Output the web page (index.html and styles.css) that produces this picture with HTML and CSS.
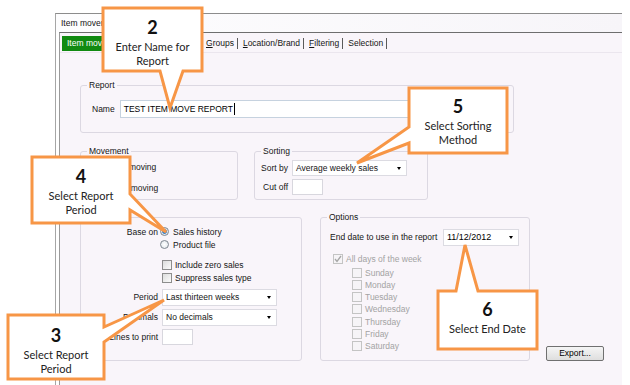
FILE: index.html
```html
<!DOCTYPE html>
<html lang="en">
  <head>
    <meta charset="UTF-8" />
    <link rel="stylesheet" href="styles.css">
    <title>Item movement report</title>
  </head>
  <body>
    <div class="window">
      <div class="titlebar">Item movement report</div>
      <div class="panel">
        <div class="tabs">
          <span class="tab-active">Item movement</span>
          <span class="tab tab-covered">Options</span>
          <span class="tab"><u>G</u>roups</span>
          <span class="tab"><u>L</u>ocation/Brand</span>
          <span class="tab"><u>F</u>iltering</span>
          <span class="tab">Selection</span>
        </div>

        <div class="content">
          <!-- Report -->
          <fieldset class="group report">
            <legend>Report</legend>
            <div class="group-body report-body">
              <span class="name-label">Name</span>
              <div class="input name-input">TEST ITEM MOVE REPORT<span class="caret"></span></div>
            </div>
          </fieldset>

          <div class="row row-middle">
            <!-- Movement -->
            <fieldset class="group movement">
              <legend>Movement</legend>
              <div class="group-body movement-body">
                <div class="option"><span class="radio on"></span>Fast moving</div>
                <div class="option"><span class="radio"></span>Slow moving</div>
              </div>
            </fieldset>

            <!-- Sorting -->
            <fieldset class="group sorting">
              <legend>Sorting</legend>
              <div class="group-body sorting-body">
                <span class="sort-label">Sort by</span>
                <div class="select sort-select"><span>Average weekly sales</span><span class="arrow"></span></div>
                <span class="sort-label">Cut off</span>
                <div class="input cutoff-input"></div>
              </div>
            </fieldset>
          </div>

          <div class="row row-bottom">
            <!-- Period -->
            <fieldset class="group period">
              <legend>Sales</legend>
              <div class="group-body period-body">
                <div class="field field-radio">
                  <span class="field-label">Base on</span>
                  <span class="radio on"></span>Sales history
                </div>
                <div class="field field-radio">
                  <span class="field-label"></span>
                  <span class="radio"></span>Product file
                </div>
                <div class="field field-check first-check">
                  <span class="field-label"></span>
                  <span class="check"></span>Include zero sales
                </div>
                <div class="field field-check">
                  <span class="field-label"></span>
                  <span class="check"></span>Suppress sales type
                </div>
                <div class="field field-select first-select">
                  <span class="field-label">Period</span>
                  <div class="select period-select"><span>Last thirteen weeks</span><span class="arrow"></span></div>
                </div>
                <div class="field field-select">
                  <span class="field-label">Decimals</span>
                  <div class="select period-select"><span>No decimals</span><span class="arrow"></span></div>
                </div>
                <div class="field field-input">
                  <span class="field-label">Lines to print</span>
                  <div class="input lines-input"></div>
                </div>
              </div>
            </fieldset>

            <!-- Options -->
            <fieldset class="group options">
              <legend>Options</legend>
              <div class="group-body options-body">
                <div class="end-date">
                  <span>End date to use in the report</span>
                  <div class="select date-select"><span class="date-text">11/12/2012</span><span class="arrow"></span></div>
                </div>
                <div class="day all-days">
                  <span class="check disabled">
                    <svg width="8" height="8" viewBox="0 0 8 8"><polyline points="1,4 3,6.5 7,1" fill="none" stroke="#a6a6a6" stroke-width="1.3"/></svg>
                  </span>All days of the week
                </div>
                <div class="day"><span class="check disabled"></span>Sunday</div>
                <div class="day"><span class="check disabled"></span>Monday</div>
                <div class="day"><span class="check disabled"></span>Tuesday</div>
                <div class="day"><span class="check disabled"></span>Wednesday</div>
                <div class="day"><span class="check disabled"></span>Thursday</div>
                <div class="day"><span class="check disabled"></span>Friday</div>
                <div class="day"><span class="check disabled"></span>Saturday</div>
              </div>
            </fieldset>

            <button class="export-btn">Export...</button>
          </div>
        </div>
      </div>
    </div>

    <!-- callouts -->
    <div class="callout callout-2">
      <svg width="99" height="63"><path d="M0,0 H99 V63 H80 L67,100 L57,63 H0 Z" /></svg>
      <div class="callout-text"><div class="num">2</div><div>Enter Name for</div><div>Report</div></div>
    </div>

    <div class="callout callout-5">
      <svg width="98" height="65"><path d="M0,0 H98 V65 H0 V55 L-52,75 L0,39 Z" /></svg>
      <div class="callout-text"><div class="num">5</div><div>Select Sorting</div><div>Method</div></div>
    </div>

    <div class="callout callout-4">
      <svg width="98" height="66"><path d="M0,0 H98 V37 L134,75 L98,53 V66 H0 Z" /></svg>
      <div class="callout-text"><div class="num">4</div><div>Select Report</div><div>Period</div></div>
    </div>

    <div class="callout callout-3">
      <svg width="96" height="64"><path d="M0,0 H96 V12 L156,-15 L96,27 V64 H0 Z" /></svg>
      <div class="callout-text"><div class="num">3</div><div>Select Report</div><div>Period</div></div>
    </div>

    <div class="callout callout-6">
      <svg width="99" height="58"><path d="M0,0 H18 L27,-46 L40,0 H99 V58 H0 Z" /></svg>
      <div class="callout-text"><div class="num">6</div><div>Select End Date</div></div>
    </div>
  </body>
</html>
```

FILE: styles.css
```css
/* base */
* {
  box-sizing: border-box;
}

body {
  margin: 0;
  width: 630px;
  height: 385px;
  overflow: hidden;
  position: relative;
  background: #fff;
  color: #151515;
  font-family: "Liberation Sans", Arial, sans-serif;
  font-size: 8.5px;
}

/* window frame */
.window {
  display: flex;
  flex-direction: column;
  width: 567px;
  height: 372px;
  margin: 13px 0 0 55px;
  border-top: 1px solid #8c8c8c;
  border-left: 1px solid #a6a6a6;
  background: #fff;
}

.titlebar {
  height: 18px;
  line-height: 18px;
  padding-left: 5px;
  background: linear-gradient(90deg, #fdfdfe, #f7f5f9);
}

.panel {
  flex: 1;
  margin-left: 3px;
  border-top: 1px solid #6e6e6e;
  border-left: 1px solid #9a9a9a;
  background: #f9f5fa;
}

/* tabs */
.tabs {
  display: flex;
  align-items: center;
  height: 20px;
  padding: 3px 0 1px 2px;
  border-bottom: 1px solid #ebe6ee;
}

.tab-active {
  width: 60px;
  height: 15px;
  line-height: 15px;
  padding-left: 5px;
  background: #118a11;
  color: #fff;
  white-space: nowrap;
  overflow: hidden;
}

.tab {
  padding: 0 3px 0 5px;
  line-height: 11px;
  border-right: 1px solid #5a5a5a;
  white-space: nowrap;
}

.tab-covered {
  width: 79px;
}

/* content */
.content {
  padding: 27px 0 0 20px;
}

.group {
  margin: 0;
  padding: 0;
  border: 1px solid #dcd8e2;
  border-radius: 3px;
}

.group legend {
  margin-left: 6px;
  padding: 0 2px;
  line-height: 11px;
}

.row {
  display: flex;
}

.row-middle {
  margin-top: 13px;
}

.row-bottom {
  margin-top: 12px;
}

/* inputs */
.input {
  background: #fff;
  border: 1px solid #d8d7de;
}

.select {
  display: flex;
  align-items: center;
  justify-content: space-between;
  padding: 0 5px 0 3px;
  background: #fff;
  border: 1px solid #dcdbe2;
  white-space: nowrap;
}

.arrow {
  width: 0;
  height: 0;
  border-left: 2.5px solid transparent;
  border-right: 2.5px solid transparent;
  border-top: 3px solid #000;
}

.radio {
  width: 9px;
  height: 9px;
  margin-right: 4px;
  border: 1px solid #7f8790;
  border-radius: 50%;
  background: radial-gradient(circle, #fff 0, #dde2e8 100%);
  flex-shrink: 0;
}

.radio.on {
  background: radial-gradient(circle, #1d5ea8 0, #3d84cc 2px, #dfe6ee 2.8px);
}

.check {
  display: flex;
  align-items: center;
  justify-content: center;
  width: 10px;
  height: 10px;
  margin-right: 3px;
  border: 1px solid #8d8d8d;
  background: linear-gradient(135deg, #dcdcdc, #fbfbfb);
  flex-shrink: 0;
}

.check.disabled {
  border-color: #c4c4c4;
  background: #f6f4f7;
}

/* report */
.report {
  width: 434px;
}

.report-body {
  display: flex;
  align-items: center;
  gap: 5px;
  padding: 9px 0 14px 11px;
}

.name-input {
  display: flex;
  align-items: center;
  width: 385px;
  height: 18px;
  padding-left: 3px;
  border-color: #c6d2df;
  color: #000;
}

.caret {
  width: 1px;
  height: 12px;
  margin-left: 1px;
  background: #000;
}

/* movement */
.movement {
  width: 158px;
}

.movement-body {
  padding: 3px 0 4px 16px;
}

.option {
  display: flex;
  align-items: center;
  height: 13px;
}

.option + .option {
  margin-top: 8px;
}

/* sorting */
.sorting {
  width: 174px;
  margin-left: 16px;
}

.sorting-body {
  display: grid;
  grid-template-columns: 27px auto;
  column-gap: 4px;
  row-gap: 3px;
  align-items: center;
  justify-items: start;
  padding: 3px 0 4px 6px;
}

.sort-label {
  justify-self: end;
  white-space: nowrap;
}

.sort-select {
  width: 115px;
  height: 16px;
}

.cutoff-input {
  width: 31px;
  height: 16px;
}

/* period */
.period {
  width: 222px;
}

.period-body {
  padding: 2px 0 15px 5px;
}

.field {
  display: flex;
  align-items: center;
}

.field-label {
  width: 72px;
  margin-right: 4px;
  text-align: right;
  white-space: nowrap;
  flex-shrink: 0;
}

.field-radio {
  height: 13px;
}

.field-radio .field-label {
  margin-right: 2px;
}

.field-check {
  height: 13px;
}

.first-check {
  margin-top: 7px;
}

.field-select {
  height: 17px;
  margin-top: 3px;
}

.first-select {
  margin-top: 4.5px;
}

.period-select {
  width: 115px;
  height: 17px;
}

.field-input {
  height: 16px;
  margin-top: 3px;
}

.lines-input {
  width: 31px;
  height: 16px;
}

/* options */
.options {
  width: 210px;
  margin-left: 18px;
}

.options-body {
  padding: 5.5px 10px 0 9px;
}

.end-date {
  display: flex;
  align-items: center;
  justify-content: space-between;
  height: 17px;
}

.date-select {
  width: 76px;
  height: 17px;
  font-size: 9px;
  color: #000;
}

.day {
  display: flex;
  align-items: center;
  height: 12.25px;
  margin-left: 22px;
  color: #a3a3a3;
}

.all-days {
  height: 12px;
  margin: 7px 0 2px 3px;
}

/* export */
.export-btn {
  align-self: flex-end;
  width: 58px;
  height: 15px;
  margin-left: 16px;
  padding: 0;
  font-family: "Liberation Sans", Arial, sans-serif;
  font-size: 8.5px;
  color: #000;
  border: 1px solid #707070;
  border-radius: 2px;
  background: linear-gradient(#f5f5f5, #dedede);
}

/* callouts */
.callout {
  position: absolute;
  font-family: Lato, "Open Sans", sans-serif;
  font-size: 11px;
  color: #222;
}

.callout svg {
  position: absolute;
  left: 0;
  top: 0;
  overflow: visible;
}

.callout path {
  fill: #fff;
  stroke: #f79646;
  stroke-width: 3;
}

.callout-text {
  position: relative;
  padding-top: 9px;
  text-align: center;
  line-height: 14px;
}

.callout-text .num {
  margin-bottom: 3px;
  font-size: 18px;
  font-weight: bold;
  line-height: 20px;
  color: #111;
}

.callout-2 {
  left: 103px;
  top: 8px;
  width: 99px;
  height: 63px;
}

.callout-5 {
  left: 409px;
  top: 88px;
  width: 98px;
  height: 65px;
}

.callout-5 .callout-text {
  padding-top: 8px;
}

.callout-4 {
  left: 32px;
  top: 157px;
  width: 98px;
  height: 66px;
}

.callout-3 {
  left: 8px;
  top: 315px;
  width: 96px;
  height: 64px;
}

.callout-3 .callout-text {
  padding-top: 10px;
}

.callout-6 {
  left: 438px;
  top: 291px;
  width: 99px;
  height: 58px;
}

.callout-6 .callout-text {
  padding-top: 8px;
}
```
